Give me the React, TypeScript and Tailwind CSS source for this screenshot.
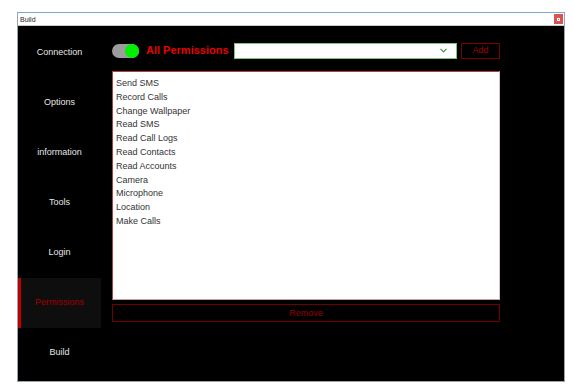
import React from 'react';

const navItems = ['Connection', 'Options', 'information', 'Tools', 'Login', 'Permissions', 'Build'];

const permissions = [
  'Send SMS',
  'Record Calls',
  'Change Wallpaper',
  'Read SMS',
  'Read Call Logs',
  'Read Contacts',
  'Read Accounts',
  'Camera',
  'Microphone',
  'Location',
  'Make Calls',
];

export default function App() {
  const active = 'Permissions';

  return (
    <div
      className="w-[574px] h-[390px] bg-white pt-[12px] pl-[17px] overflow-hidden"
      style={{ fontFamily: '"Liberation Sans", Arial, sans-serif' }}
    >
      <div className="w-[548px] h-[370px] flex flex-col border border-[#9aa4ad] border-t-[#7fa7c9] bg-black">
        {/* title bar */}
        <div className="h-[13px] bg-white flex items-center justify-between border-b border-[#c8c8c8]">
          <span className="text-[7px] leading-none text-[#222] pl-[2px]">Build</span>
          <button className="w-[9px] h-[10px] bg-[#d9534f] flex items-center justify-center mr-[1px]">
            <span className="block w-[3px] h-[3px] border border-white" />
          </button>
        </div>

        <div className="flex flex-1">
          {/* sidebar */}
          <div className="w-[83px] pt-[2px] flex flex-col">
            {navItems.map((item) => (
              <div
                key={item}
                className={`h-[50px] flex items-center justify-center text-[9px] ${
                  item === active
                    ? 'bg-[#0e0e0e] border-l-[3px] border-[#c00000] text-[#a00000] pr-[3px]'
                    : 'text-[#e6e6e6]'
                }`}
              >
                {item}
              </div>
            ))}
          </div>

          {/* main */}
          <div className="w-[388px] ml-[11px] pt-[17px] flex flex-col">
            <div className="h-[15px] flex items-center">
              <div className="w-[27px] h-[14px] shrink-0 rounded-full bg-[#9c9c9c] flex justify-end">
                <div className="w-[14px] h-[14px] rounded-full bg-[#00f000]" />
              </div>
              <span className="ml-[7px] text-[11px] font-bold text-[#e60000] leading-none whitespace-nowrap">
                All Permissions
              </span>
              <div className="ml-auto w-[223px] h-[16px] shrink-0 bg-white border border-[#7cc67c] flex items-center justify-end pr-[9px]">
                <svg width="7" height="5" viewBox="0 0 7 5">
                  <path d="M0.5 0.8 L3.5 3.8 L6.5 0.8" fill="none" stroke="#3c9a3c" strokeWidth="1.2" />
                </svg>
              </div>
              <button className="ml-[4px] w-[39px] h-[16px] shrink-0 border border-[#7a0000] text-[9px] text-[#a00000] leading-none">
                Add
              </button>
            </div>

            <div className="mt-[13px] h-[229px] bg-white border border-[#b04040] border-r-[#d8c8c8] border-b-[#c8a0a0] pl-[3px] pt-[5px]">
              {permissions.map((p) => (
                <div key={p} className="h-[13.8px] leading-[13.8px] text-[9px] text-[#333]">
                  {p}
                </div>
              ))}
            </div>

            <button className="mt-[4px] h-[18px] border border-[#6e0000] text-[9px] text-[#9b0000] leading-none">
              Remove
            </button>
          </div>
        </div>
      </div>
    </div>
  );
}
